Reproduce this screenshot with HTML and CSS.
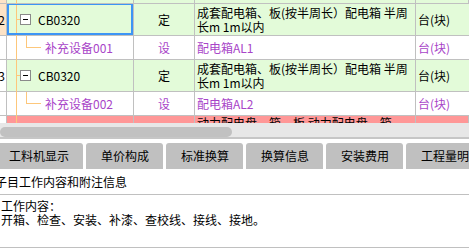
FILE: index.html
```html
<!DOCTYPE html>
<html lang="zh-CN">
<head>
    <meta charset="UTF-8">
    <meta name="viewport" content="width=device-width, initial-scale=1.0">
    <title>子目工作内容</title>
    <link rel="stylesheet" href="styles.css">
</head>
<body>
    <!-- 清单表格 -->
    <div class="grid">
        <div class="tree-line"></div>

        <div class="row row-cut">
            <div class="cell num cur"></div>
            <div class="cell"></div>
            <div class="cell"></div>
            <div class="cell"></div>
            <div class="cell"></div>
        </div>

        <div class="row row-main">
            <div class="cell num cur">2</div>
            <div class="cell tree selected"><span class="toggle"></span><span>CB0320</span></div>
            <div class="cell type">定</div>
            <div class="cell name">成套配电箱、板(按半周长）配电箱 半周长m 1m以内</div>
            <div class="cell unit">台(块)</div>
        </div>

        <div class="row row-sub">
            <div class="cell num"></div>
            <div class="cell tree child"><span class="elbow"></span><span>补充设备001</span></div>
            <div class="cell type">设</div>
            <div class="cell name">配电箱AL1</div>
            <div class="cell unit">台(块)</div>
        </div>

        <div class="row row-main">
            <div class="cell num">3</div>
            <div class="cell tree"><span class="toggle"></span><span>CB0320</span></div>
            <div class="cell type">定</div>
            <div class="cell name">成套配电箱、板(按半周长）配电箱 半周长m 1m以内</div>
            <div class="cell unit">台(块)</div>
        </div>

        <div class="row row-sub">
            <div class="cell num"></div>
            <div class="cell tree child"><span class="elbow"></span><span>补充设备002</span></div>
            <div class="cell type">设</div>
            <div class="cell name">配电箱AL2</div>
            <div class="cell unit">台(块)</div>
        </div>

        <div class="row row-next">
            <div class="cell num"></div>
            <div class="cell"></div>
            <div class="cell"></div>
            <div class="cell name">动力配电盘、箱、板 动力配电盘、箱、板</div>
            <div class="cell"></div>
        </div>
    </div>

    <!-- 横向滚动条 -->
    <div class="hscroll">
        <div class="thumb"></div>
    </div>

    <!-- 页签 -->
    <div class="tabs">
        <div class="tab">工料机显示</div>
        <div class="tab">单价构成</div>
        <div class="tab">标准换算</div>
        <div class="tab">换算信息</div>
        <div class="tab">安装费用</div>
        <div class="tab">工程量明细</div>
    </div>

    <!-- 工作内容 -->
    <div class="panel">
        <div class="panel-title">子目工作内容和附注信息</div>
        <div class="panel-body">
            <p>工作内容：</p>
            <p>开箱、检查、安装、补漆、查校线、接线、接地。</p>
        </div>
    </div>
</body>
</html>
```

FILE: styles.css
```css
body {
    margin: 0;
    width: 469px;
    height: 250px;
    overflow: hidden;
    font-family: "Noto Sans CJK SC", sans-serif;
    font-size: 12px;
    color: #000;
    background-color: #fff;
}
.grid {
    position: relative;
    height: 123px;
    overflow: hidden;
}
.tree-line {
    position: absolute;
    left: 16px;
    top: 0;
    bottom: 0;
    width: 1px;
    background-color: #fdc77b;
    z-index: 1;
}
.row {
    display: grid;
    grid-template-columns: 7px 127px 61px 221px 1fr;
    border-bottom: 1px solid #c0c0c0;
    box-sizing: border-box;
}
.row-cut {
    height: 4px;
}
.row-main {
    height: 32px;
}
.row-sub {
    height: 24px;
}
.row-next {
    height: 40px;
}
.cell {
    position: relative;
    display: flex;
    align-items: center;
    overflow: hidden;
    line-height: 14px;
    border-right: 1px solid #c0c0c0;
    box-sizing: border-box;
}
.row-cut .cell,
.row-main .cell {
    background-color: #e3fbd9;
}
.row-next .cell {
    background-color: #ff9797;
    align-items: flex-start;
}
.row-sub .cell {
    color: #a844c8;
}
.cell.num {
    justify-content: flex-end;
    padding-right: 1px;
    background-color: #fff;
    color: #000;
}
.cell.num.cur {
    background-color: #fde3c6;
}
.tree {
    padding-left: 13px;
}
.tree.child {
    padding-left: 38px;
}
.selected::after {
    content: "";
    position: absolute;
    top: -1px;
    left: 0;
    right: 0;
    bottom: 0;
    border: 2px solid #3d95f5;
    z-index: 2;
}
.toggle {
    position: relative;
    width: 11px;
    height: 11px;
    margin-right: 7px;
    border: 1px solid #8a8a8a;
    background-color: #fff;
    box-sizing: border-box;
    flex-shrink: 0;
}
.toggle::before {
    content: "";
    position: absolute;
    left: -5px;
    top: 4px;
    width: 4px;
    height: 1px;
    background-color: #fdc77b;
}
.toggle::after {
    content: "";
    position: absolute;
    left: 2px;
    top: 4px;
    width: 5px;
    height: 1px;
    background-color: #000;
}
.elbow {
    position: absolute;
    left: 19px;
    top: 0;
    width: 14px;
    height: 11px;
    border-left: 1px solid #fdc77b;
    border-bottom: 1px solid #fdc77b;
}
.type {
    justify-content: center;
}
.name {
    padding-left: 2px;
}
.unit {
    padding-left: 2px;
    border-right: none;
}
.hscroll {
    height: 16px;
    padding-top: 4px;
    box-sizing: border-box;
    background-color: #e7e7e7;
    border-bottom: 2px solid #c6c6c6;
}
.thumb {
    width: 232px;
    height: 10px;
    border-radius: 5px;
    background-color: #c1c1c1;
}
.tabs {
    display: flex;
    gap: 3px;
    margin-top: 4px;
    margin-left: -6px;
}
.tab {
    height: 26px;
    line-height: 26px;
    padding: 0 14px 0 15px;
    border-radius: 3px 3px 0 0;
    background-color: #c0c0c0;
    white-space: nowrap;
    flex-shrink: 0;
}
.panel-title {
    height: 25px;
    line-height: 25px;
    text-indent: -5px;
    border-bottom: 1px solid #c0c0c0;
    white-space: nowrap;
}
.panel-body {
    height: 53px;
    padding: 4px 0 0 1px;
    box-sizing: border-box;
    border-bottom: 1px solid #c0c0c0;
}
.panel-body p {
    margin: 0;
    line-height: 14px;
}
```
